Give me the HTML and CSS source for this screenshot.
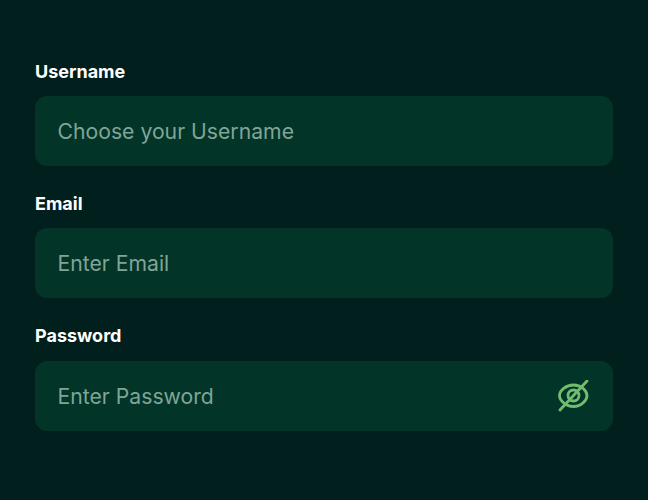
FILE: index.html
```html
<!DOCTYPE html>
<html lang="en">
<head>
<meta charset="utf-8">
<title>Sign up</title>
<link rel="stylesheet" href="styles.css">
</head>
<body>
<form class="form">
  <div class="field">
    <label class="label" for="u">Username</label>
    <div class="control"><input class="input" id="u" type="text" placeholder="Choose your Username"></div>
  </div>
  <div class="field">
    <label class="label" for="e">Email</label>
    <div class="control"><input class="input" id="e" type="text" placeholder="Enter Email"></div>
  </div>
  <div class="field">
    <label class="label" for="p">Password</label>
    <div class="control">
      <input class="input" id="p" type="password" placeholder="Enter Password">
      <svg class="eye" viewBox="0 0 32 32" fill="none" stroke="currentColor" stroke-width="2.800" stroke-linecap="round" stroke-linejoin="round">
        <path d="M2.500 15.500C2.500 10.500 9 5 16.500 5S30 10.500 30 15.500 24 26.500 16.500 26.500 2.500 20.500 2.500 15.500Z"/>
        <circle cx="16.500" cy="15.500" r="5.500"/>
        <path d="M30 1 3 30"/>
      </svg>
    </div>
  </div>
</form>
</body>
</html>
```
FILE: styles.css
```css
html, body { margin: 0; padding: 0; }
body { width: 648px; height: 500px; background: #011f1c; font-family: Inter, sans-serif; overflow: hidden; }
.form { display: flex; flex-direction: column; gap: 27px; padding: 60.6px 35px 0; }
.field { display: flex; flex-direction: column; gap: 13.4px; }
.label { color: #fff; font-size: 18px; font-weight: 700; line-height: 22px; }
.control { display: flex; align-items: center; height: 70px; background: #023428; border-radius: 12px; padding: 0 24px 0 22.5px; }
.input { flex: 1; min-width: 0; background: none; border: 0; outline: 0; padding: 0; font: 400 21.2px Inter, sans-serif; color: #fff; }
.input::placeholder { color: #7fa597; opacity: 1; }
.eye { width: 32px; height: 32px; color: #72bd6f; flex: none; }
```
